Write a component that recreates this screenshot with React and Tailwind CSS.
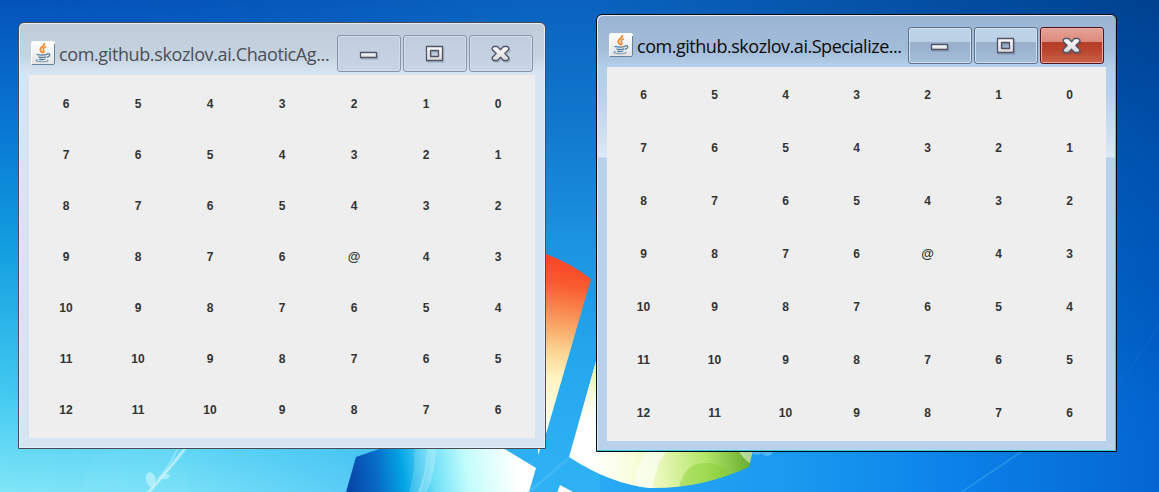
import React from "react";

function Wallpaper() {
  return (
    <svg className="absolute inset-0" width="1159" height="492" viewBox="0 0 1159 492" aria-hidden="true">
      <defs>
        <linearGradient id="mid" x1="0" y1="0" x2="0" y2="1">
          <stop offset="0" stopColor="#0a62be" />
          <stop offset=".26" stopColor="#1179cf" />
          <stop offset=".5" stopColor="#1c94e1" />
          <stop offset=".75" stopColor="#25a8ee" />
          <stop offset="1" stopColor="#2fb2f5" />
        </linearGradient>
        <linearGradient id="left" x1="0" y1="0" x2="0" y2="1">
          <stop offset="0" stopColor="#0553b9" />
          <stop offset=".26" stopColor="#0978d4" />
          <stop offset=".5" stopColor="#129ddf" />
          <stop offset=".8" stopColor="#42c9f1" />
          <stop offset="1" stopColor="#80e5f7" />
        </linearGradient>
        <linearGradient id="right" x1="0" y1="0" x2="0" y2="1">
          <stop offset="0" stopColor="#00418f" />
          <stop offset=".3" stopColor="#0050ad" />
          <stop offset=".7" stopColor="#005dc4" />
          <stop offset="1" stopColor="#0567d2" />
        </linearGradient>
        <linearGradient id="fadeL" x1="0" y1="0" x2="1" y2="0">
          <stop offset="0" stopColor="#fff" />
          <stop offset=".16" stopColor="#e4e4e4" />
          <stop offset=".3" stopColor="#888" />
          <stop offset=".45" stopColor="#000" />
        </linearGradient>
        <linearGradient id="fadeR" x1="0" y1="0" x2="1" y2="0">
          <stop offset=".52" stopColor="#000" />
          <stop offset="1" stopColor="#fff" />
        </linearGradient>
        <linearGradient id="lowBlue" x1="0" y1="0" x2="1" y2="0">
          <stop offset="0" stopColor="#27a9f4" />
          <stop offset=".33" stopColor="#1a9af0" />
          <stop offset=".62" stopColor="#0c83ea" />
          <stop offset="1" stopColor="#0465d2" />
        </linearGradient>
        <linearGradient id="fadeLow" gradientUnits="userSpaceOnUse" x1="0" y1="340" x2="0" y2="450">
          <stop offset="0" stopColor="#000" />
          <stop offset="1" stopColor="#fff" />
        </linearGradient>
        <mask id="mL"><rect width="1159" height="492" fill="url(#fadeL)" /></mask>
        <mask id="mR"><rect width="1159" height="492" fill="url(#fadeR)" /></mask>
        <mask id="mLow"><rect width="1159" height="492" fill="url(#fadeLow)" /></mask>
        <linearGradient id="red" gradientUnits="userSpaceOnUse" x1="575" y1="262" x2="550" y2="425">
          <stop offset="0" stopColor="#f84626" />
          <stop offset=".15" stopColor="#f95c30" />
          <stop offset=".38" stopColor="#f9a060" />
          <stop offset=".55" stopColor="#fbd492" />
          <stop offset=".72" stopColor="#fff4c2" />
          <stop offset="1" stopColor="#fffcea" />
        </linearGradient>
        <linearGradient id="blue" gradientUnits="userSpaceOnUse" x1="350" y1="475" x2="515" y2="455">
          <stop offset="0" stopColor="#0749ab" />
          <stop offset=".15" stopColor="#0868c4" />
          <stop offset=".32" stopColor="#04a6e6" />
          <stop offset=".5" stopColor="#70e0f7" />
          <stop offset=".7" stopColor="#c2fcfb" />
          <stop offset="1" stopColor="#ffffff" />
        </linearGradient>
        <linearGradient id="green" gradientUnits="userSpaceOnUse" x1="590" y1="470" x2="750" y2="460">
          <stop offset="0" stopColor="#ffffff" />
          <stop offset=".25" stopColor="#f9fedf" />
          <stop offset=".45" stopColor="#e6f6b4" />
          <stop offset=".72" stopColor="#b4e66a" />
          <stop offset="1" stopColor="#66ad2d" />
        </linearGradient>
        <linearGradient id="greenTop" x1="0" y1="0" x2="0" y2="1">
          <stop offset="0" stopColor="#d8ec88" />
          <stop offset=".6" stopColor="#f5fbdd" stopOpacity=".8" />
          <stop offset="1" stopColor="#fff" stopOpacity="0" />
        </linearGradient>
        <clipPath id="gc"><path d="M597 358L569 457Q610 484 650 488Q700 489 749 467L753 450V358Z" /></clipPath>
        <clipPath id="bc"><path d="M356 457L382 448H503L536 468L529 492H346Z" /></clipPath>
      </defs>
      <rect width="1159" height="492" fill="url(#mid)" />
      <rect width="1159" height="492" fill="url(#left)" mask="url(#mL)" />
      <rect width="1159" height="492" fill="url(#right)" mask="url(#mR)" />
      <rect x="600" y="340" width="559" height="152" fill="url(#lowBlue)" mask="url(#mLow)" />

      <path d="M538 251Q570 262 591 279L546 434L538 455Z" fill="url(#red)" />

      <g clipPath="url(#bc)">
        <rect x="340" y="440" width="200" height="60" fill="url(#blue)" />
        <path d="M414 440Q416 470 409 492H421Q429 470 427 440Z" fill="#fff" opacity=".15" />
        <path d="M427 440H436Q437 470 427 492H418Q428 470 427 440Z" fill="#fff" opacity=".25" />
      </g>

      <g clipPath="url(#gc)">
        <rect x="560" y="350" width="200" height="142" fill="url(#green)" />
        <rect x="560" y="358" width="40" height="70" fill="url(#greenTop)" />
        <path d="M647 450Q635 468 634 492H652Q654 468 667 450Z" fill="#fff" opacity=".6" />
        <path d="M678 492Q683 462 706 463Q722 463 731 477L725 492Z" fill="#83cb2e" opacity=".4" />
        <path d="M738 450Q743 459 751 464L756 450Z" fill="#fff" opacity=".5" />
      </g>
      <path d="M560 485L575 493H557Z" fill="#fff" />
      <path d="M569 458L528 493" stroke="#6cc9f8" strokeWidth="3" opacity=".3" />
      <circle cx="757" cy="449" r="6" fill="#9dd8fb" opacity=".4" />
      <circle cx="767" cy="450" r="6" fill="#9dd8fb" opacity=".4" />

      <path d="M104 449Q82 470 81 492H190L180 449Z" fill="#fff" opacity=".03" />
      <path d="M187 446Q166 473 148 493" stroke="#d8f8ff" strokeWidth="5" fill="none" opacity=".2" />
      <path d="M187 446Q166 473 148 493" stroke="#e4fbff" strokeWidth="1.5" fill="none" opacity=".75" />
      <path d="M178 448Q168 468 158 479" stroke="#e4fbff" strokeWidth="1.5" fill="none" opacity=".35" />
      <path d="M153 488C145 486 143 474 150 472C157 474 157 484 153 488Z" fill="#c9f6ff" opacity=".65" />
      <path d="M159 478Q164 472 170 475Q168 482 159 478Z" fill="#c9f6ff" opacity=".6" />
      <path d="M960 493L1024 450" stroke="#3fa8f0" strokeWidth="1.6" opacity=".5" />
      <path d="M1116 385Q1136 363 1159 325" stroke="#2a86de" strokeWidth="1.2" fill="none" opacity=".2" />
    </svg>
  );
}

function JavaIcon() {
  return (
    <svg className="mt-[18px] shrink-0" width="24" height="24" viewBox="0 0 24 24" fill="none" aria-hidden="true">
      <defs>
        <linearGradient id="tile" x1="0" y1="0" x2="0" y2="1">
          <stop offset="0" stopColor="#ffffff" />
          <stop offset="1" stopColor="#e2e4e6" />
        </linearGradient>
      </defs>
      <rect x=".5" y=".5" width="23" height="23" rx="1.5" fill="url(#tile)" stroke="#f8fafb" />
      <path d="M1 23.5H22Q23.5 23.5 23.5 22V3" stroke="#66859d" strokeWidth="1" />
      <path d="M13.3 2.200C14.300 5 8.500 6.300 9.200 8.900C9.600 10.300 11.300 10.900 11.700 12.300" stroke="#ed8123" strokeWidth="1.7" />
      <path d="M15.200 5.700C11.400 7.200 11.800 8.500 12.700 9.600C13.300 10.500 13 11.300 12.400 12" stroke="#ed8123" strokeWidth="1.4" />
      <path d="M5.500 13.300Q11 14.900 16.600 13.200" stroke="#557d9b" strokeWidth="1.3" />
      <path d="M16.200 12.700C19.800 12.100 19.700 15.200 15.800 16.400" stroke="#557d9b" strokeWidth="1.2" />
      <path d="M7.400 15.900Q11.300 17.100 15.200 15.800M8.200 18.100Q11.300 19.100 14.400 18" stroke="#557d9b" strokeWidth="1.3" />
      <path d="M6.700 18.500C2.500 19.700 6.500 20.800 11 20.800C14.500 20.800 18.500 20 16.200 18.900" stroke="#7896ac" strokeWidth="1.1" />
    </svg>
  );
}

const glyphs = {
  minimize: (
    <path d="M23.500 17.500H39.500V22.500H23.500Z" />
  ),
  maximize: (
    <path fillRule="evenodd" d="M23.500 11.500H39.500V25.500H23.500ZM27.500 15.500V21.500H35.500V15.500Z" />
  ),
  close: (
    <path d="M24.500 11.500H28.500L31.500 14.700L34.500 11.500H38.500L39.800 13V14.500L35.800 18.500L39.800 22.500V24L38.500 25.500H34.500L31.500 22.300L28.500 25.500H24.500L23.200 24V22.500L27.200 18.500L23.200 14.500V13Z" />
  ),
};

function CaptionButton({ kind, tone }) {
  return (
    <button
      aria-label={kind}
      className={`flex h-[37px] w-16 shrink-0 items-center justify-center rounded-[3px] border ${tone}`}
    >
      <svg width="62" height="35" viewBox="1 1 62 35" fill="none" aria-hidden="true">
        <defs>
          <linearGradient id={`face-${kind}`} x1="0" y1="0" x2="0" y2="1">
            <stop offset="0" stopColor="#ffffff" />
            <stop offset="1" stopColor="#d9d9dc" />
          </linearGradient>
        </defs>
        <g stroke="#3c4660" strokeWidth="1.5" opacity=".22" transform="translate(1 1.500)">{glyphs[kind]}</g>
        <g fill={`url(#face-${kind})`} stroke="#505366" strokeWidth="1.3" strokeLinejoin="round">{glyphs[kind]}</g>
      </svg>
    </button>
  );
}

const inactiveTone =
  "border-[#8795ad] bg-linear-to-b from-[#c0cddd] to-[#c7d5e7] shadow-[inset_0_0_0_1px_#d3deeb]";
const activeTone =
  "border-[#60728c] bg-[linear-gradient(#bfd3e8_0,#bbd0e6_14px,#98b0cc_14px,#9bb3cf_60%,#a5bfda_100%)] shadow-[inset_0_0_0_1px_#d1e0f0]";
const closeTone =
  "border-[#511522] bg-[linear-gradient(#e6a396_0,#dd8a7d_14px,#b43d27_14px,#b9432c_60%,#ca604a_100%)] shadow-[inset_0_0_0_1px_#e8a99c]";

function Cell({ value }) {
  const size = value === "@" ? "pb-px text-[13px]" : "";
  return <span className={`flex items-center justify-center ${size}`}>{value}</span>;
}

function AgentWindow({ title, active, place, frame, titleStyle, gridStyle }) {
  return (
    <section className={`absolute flex flex-col border px-2.5 pb-2.5 ${place} ${frame}`}>
      <header className="flex h-[52px] shrink-0 px-0.5">
        <JavaIcon />
        <h1 className={`ml-1 h-[26px] min-w-0 flex-1 whitespace-nowrap font-['Open_Sans','Noto_Sans',sans-serif] text-[18px] leading-[26px] ${titleStyle}`}>
          {title}
        </h1>
        <div className="mt-3 flex gap-0.5">
          <CaptionButton kind="minimize" tone={active ? activeTone : inactiveTone} />
          <CaptionButton kind="maximize" tone={active ? activeTone : inactiveTone} />
          <CaptionButton kind="close" tone={active ? closeTone : inactiveTone} />
        </div>
      </header>
      <main className={`grid flex-1 grid-cols-7 grid-rows-7 bg-[#eeeeee] px-px font-['Liberation_Sans',Arial,sans-serif] text-[12px] font-bold leading-none text-[#333333] ${gridStyle}`}>
        {Array.from({ length: 49 }, (_, i) => {
          const row = Math.floor(i / 7);
          const col = i % 7;
          const value = row === 3 && col === 4 ? "@" : row + 6 - col;
          return <Cell key={i} value={value} />;
        })}
      </main>
    </section>
  );
}

export default function App() {
  return (
    <div className="relative h-[492px] w-[1159px] overflow-hidden bg-[#1c94e1]">
      <Wallpaper />
      <AgentWindow
        title="com.github.skozlov.ai.ChaoticAg..."
        place="left-[18px] top-[22px] h-[427px] w-[528px]"
        frame="rounded-t-[6px] border-[#4b4b50] bg-[linear-gradient(#bfcddb_0,#c5d2df_32px,#d7e4f1_50px,#d7e4f1_100%)] shadow-[inset_0_0_0_1px_#e4edf5]"
        titleStyle="mt-[18px] tracking-[-0.38px] text-[#4a4f57]"
        gridStyle="py-[3px]"
      />
      <AgentWindow
        title="com.github.skozlov.ai.Specialize..."
        active
        place="left-[596px] top-[14px] h-[438px] w-[521px]"
        frame="rounded-t-[6px] border-[#05080d] bg-[linear-gradient(#99b4d3_0,#a3bcd8_34px,#b4cfea_52px,#b9d1ec_80px,#dce8f5_142px,#b9d1eb_143px,#b9d1eb_100%)] shadow-[inset_-1px_-1px_0_#2fd0e2,inset_1px_1px_0_#e5eef8]"
        titleStyle="mt-[18px] tracking-[-0.47px] text-[#0b0b0d]"
        gridStyle="py-px"
      />
    </div>
  );
}
